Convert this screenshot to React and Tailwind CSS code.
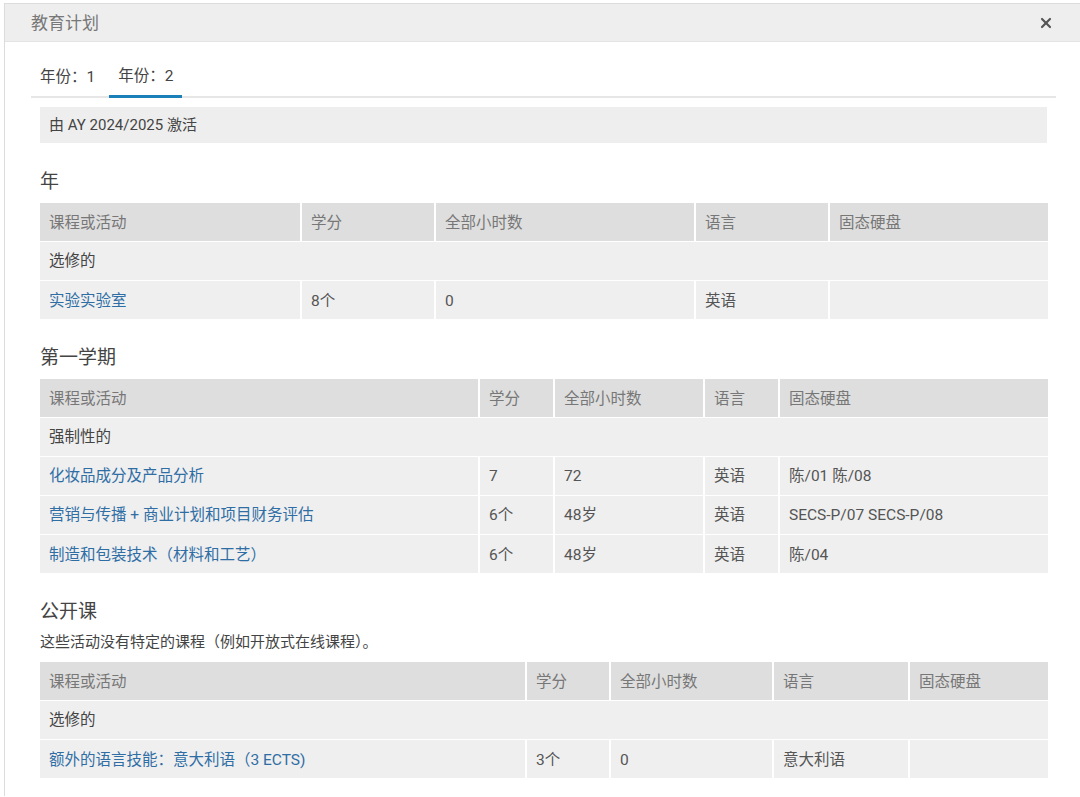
import { X } from 'lucide-react';

const FONT = { fontFamily: 'Roboto, "Noto Sans CJK SC", sans-serif' };

const years = [
  {
    title: '年',
    cols: [261, 134, 260, 134, 219],
    groups: [
      {
        label: '选修的',
        rows: [['实验实验室', '8个', '0', '英语', '']],
      },
    ],
  },
  {
    title: '第一学期',
    cols: [439, 75, 150, 75, 269],
    groups: [
      {
        label: '强制性的',
        rows: [
          ['化妆品成分及产品分析', '7', '72', '英语', '陈/01 陈/08'],
          ['营销与传播 + 商业计划和项目财务评估', '6个', '48岁', '英语', 'SECS-P/07 SECS-P/08'],
          ['制造和包装技术（材料和工艺）', '6个', '48岁', '英语', '陈/04'],
        ],
      },
    ],
  },
  {
    title: '公开课',
    note: '这些活动没有特定的课程（例如开放式在线课程）。',
    cols: [486, 84, 163, 136, 139],
    groups: [
      {
        label: '选修的',
        rows: [['额外的语言技能：意大利语（3 ECTS)', '3个', '0', '意大利语', '']],
      },
    ],
  },
];

const headers = ['课程或活动', '学分', '全部小时数', '语言', '固态硬盘'];

function PlanTable({ cols, groups }) {
  return (
    <table className="w-full table-fixed border-collapse text-[15.5px]">
      <colgroup>
        {cols.map((w, i) => (
          <col key={i} style={{ width: w }} />
        ))}
      </colgroup>
      <thead>
        <tr className="bg-[#dedede]">
          {headers.map((h, i) => (
            <th
              key={h}
              className={`h-[38px] px-[9px] pt-[3px] text-left font-normal text-[#777] ${i > 0 ? 'border-l-2 border-white' : ''}`}
            >
              {h}
            </th>
          ))}
        </tr>
      </thead>
      <tbody>
        {groups.map((g) => [
          <tr key={g.label} className="bg-[#efefef] border-t border-white">
            <td colSpan={5} className="h-[39px] px-[9px] pt-[3px] text-[#444]">
              {g.label}
            </td>
          </tr>,
          ...g.rows.map((r) => (
            <tr key={r[0]} className="bg-[#efefef] border-t border-white">
              {r.map((c, i) => (
                <td
                  key={i}
                  className={`h-[39px] px-[9px] pt-[3px] ${i === 0 ? 'text-[#2f6ea5]' : 'text-[#555] border-l-2 border-white'}`}
                >
                  {c}
                </td>
              ))}
            </tr>
          )),
        ])}
      </tbody>
    </table>
  );
}

export default function App() {
  return (
    <div className="bg-white min-h-[797px] pt-[3px] pl-[4px]" style={FONT}>
      <div className="border-l border-t border-[#dcdcdc]">
        <div className="h-[38px] bg-[#eeeeee] border-b border-[#e4e4e4] flex items-center justify-between pl-[26px] pr-[26px]">
          <span className="text-[17px] text-[#777] pt-[2px]">教育计划</span>
          <X size={16} strokeWidth={3.2} className="text-[#555]" />
        </div>

        <div className="pl-[26px] pr-[24px] pb-[18px]">
          <div className="flex border-b-2 border-[#e6e6e6] h-[56px]">
            <div className="px-[9px] flex items-end pb-[7px] text-[15.5px] text-[#444]">年份：1</div>
            <div className="ml-[5px] px-[9px] flex items-end pb-[7px] text-[15.5px] text-[#444] border-b-[3px] border-[#1b7fb8] -mb-[2px]">
              年份：2
            </div>
          </div>

          <div className="px-[9px]">
            <div className="mt-[9px] h-[36px] bg-[#eeeeee] flex items-center px-[9px] text-[15px] text-[#444]">
              由 AY 2024/2025 激活
            </div>

            {years.map((y) => (
              <div key={y.title}>
                <h2 className="mt-[26px] mb-[8px] text-[19px] leading-[26px] text-[#444]">{y.title}</h2>
                {y.note && (
                  <p className="-mt-[2px] mb-[9px] text-[15px] leading-[22px] text-[#444]">{y.note}</p>
                )}
                <PlanTable cols={y.cols} groups={y.groups} />
              </div>
            ))}
          </div>
        </div>
      </div>
    </div>
  );
}
